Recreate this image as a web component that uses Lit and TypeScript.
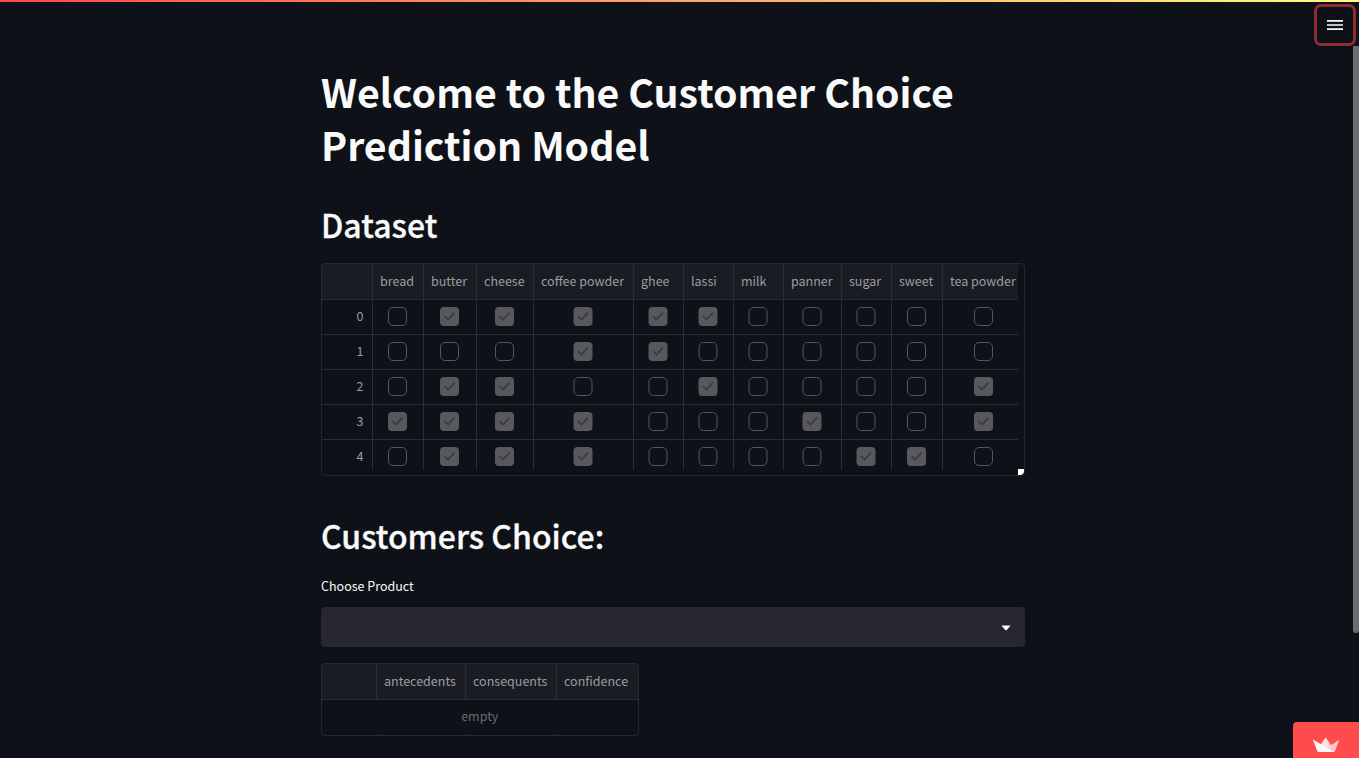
import { LitElement, html, css, svg, nothing } from "lit";
import { customElement, property } from "lit/decorators.js";

interface Column {
  name: string;
  width: number;
  checked: boolean[];
}

const col = (name: string, width: number, bits: string): Column => ({
  name,
  width,
  checked: [...bits].map((b) => b === "1"),
});

const DATASET: Column[] = [
  col("bread", 51, "00010"),
  col("butter", 53, "10111"),
  col("cheese", 57, "10111"),
  col("coffee powder", 100, "11011"),
  col("ghee", 50, "11000"),
  col("lassi", 50, "10100"),
  col("milk", 50, "00000"),
  col("panner", 58, "00010"),
  col("sugar", 50, "00001"),
  col("sweet", 51, "00001"),
  col("tea powder", 76, "00110"),
];

@customElement("check-cell")
class CheckCell extends LitElement {
  @property({ type: Boolean }) checked = false;
  // Boxes in even-width columns are centred on a half pixel.
  @property({ type: Boolean }) half = false;

  static styles = css`
    :host { display: block; height: 19px; }
    .icon { display: block; }
  `;

  render() {
    const w = this.half ? 20 : 19;
    const x = this.half ? 0.5 : 0;
    return html`<svg class="icon" width=${w} height="19" viewBox="${-x} 0 ${w} 19" fill="none">
      ${this.checked
        ? svg`<rect x="0" y="0" width="19" height="19" rx="4" fill="#57595f"/>
            <path d="M5 9.6L8.1 12.6L14 6.2" stroke="#3a3c42" stroke-width="1.8" stroke-linecap="round" stroke-linejoin="round"/>`
        : svg`<rect x="0.5" y="0.5" width="18" height="18" rx="4.5" stroke="#55575b"/>`}
    </svg>`;
  }
}

@customElement("data-grid")
class DataGrid extends LitElement {
  static styles = css`
    :host { display: block; }
    .frame {
      box-sizing: border-box; width: 704px; height: 213px; position: relative;
      border: 1px solid #25282e; border-radius: 4px; overflow: hidden;
    }
    .canvas { width: 696px; height: 206px; overflow: hidden; }
    .row { display: flex; height: 35px; }
    .row.head { height: 36px; background: #1a1c23; }
    .cell {
      box-sizing: border-box; flex: none; display: flex; align-items: center; justify-content: center;
      border-right: 1px solid #2b2d32; border-bottom: 1px solid #2b2d32; padding: 0 1px 2px 0;
    }
    .cell:last-child { border-right: 0; padding-right: 0; padding-left: 5px; }
    .cell.index { width: 51px; justify-content: flex-end; padding: 0 8.5px 2px 0; color: #9b9ca0; }
    .cell.title { justify-content: flex-start; padding: 0 0 2px 7px; white-space: nowrap; color: #9b9ca0; }
    .row { font-size: 12.5px; line-height: 18px; }
    .grip {
      position: absolute; right: 0; bottom: 0; width: 6px; height: 6px; background: #fff;
      border-bottom-right-radius: 4px;
    }
  `;

  render() {
    const last = DATASET.length - 1;
    return html`<div class="frame">
      <div class="canvas">
        <div class="row head">
          <div class="cell index"></div>
          ${DATASET.map((c) => html`<div class="cell title" style="width:${c.width}px">${c.name}</div>`)}
        </div>
        ${[0, 1, 2, 3, 4].map(
          (i) => html`<div class="row">
            <div class="cell index">${i}</div>
            ${DATASET.map(
              (c, k) => html`<div class="cell" style="width:${c.width}px"><check-cell
                ?checked=${c.checked[i]} ?half=${c.width % 2 === 0 && k !== last}></check-cell></div>`
            )}
          </div>`
        )}
      </div>
      <div class="grip"></div>
    </div>`;
  }
}

@customElement("empty-grid")
class EmptyGrid extends LitElement {
  static styles = css`
    :host { display: block; }
    .frame {
      box-sizing: border-box; width: 318px; height: 73px; border: 1px solid #25282e;
      border-radius: 4px; overflow: hidden; font-size: 12.5px; line-height: 18px;
    }
    .row { display: grid; grid-template-columns: 55px 89px 91px 1fr; }
    .head { height: 36px; box-sizing: border-box; background: #1a1c23; border-bottom: 1px solid #2b2d32; }
    .cell { border-right: 1px solid #2b2d32; padding-left: 7px; display: flex; align-items: center; color: #9b9ca0; }
    .head .cell { padding-bottom: 2px; }
    .cell:last-child { border-right: 0; }
    .empty {
      height: 34px; box-sizing: border-box; padding: 0 0.5px 2px 0; display: flex; align-items: center;
      justify-content: center; color: #676a71;
    }
    .stub { height: 1px; }
  `;

  render() {
    const names = ["", "antecedents", "consequents", "confidence"];
    return html`<div class="frame">
      <div class="row head">${names.map((n) => html`<div class="cell">${n || nothing}</div>`)}</div>
      <div class="empty">empty</div>
      <div class="row stub">${names.map(() => html`<div class="cell"></div>`)}</div>
    </div>`;
  }
}

@customElement("app-root")
class AppRoot extends LitElement {
  static styles = css`
    :host {
      display: block; position: relative; height: 758px; overflow: hidden; background: #0e1117; color: #fafafa;
      font-family: "Source Sans Pro", "Noto Sans CJK SC", sans-serif;
    }
    .rainbow { height: 2px; background: linear-gradient(90deg, #ff4b4b, #fffd80); }
    .main { width: 704px; padding: 62px 0 0 321px; }
    h1, h2 { margin: 0; white-space: nowrap; }
    h1 { font-size: 39.25px; line-height: 53px; font-weight: 700; }
    h2 { font-size: 32px; line-height: 43px; font-weight: 500; -webkit-text-stroke: 0.3px #fafafa; }
    .dataset { padding: 33px 0 17px; }
    .choice { padding: 38px 0 18px; }
    .label { font-size: 12.5px; line-height: 21px; padding-bottom: 11px; }
    .select {
      height: 40px; background: #262730; border-radius: 4px; display: flex; align-items: center;
      justify-content: flex-end; padding: 1px 14px 0 0; box-sizing: border-box; margin-bottom: 16px;
    }
    .menu {
      position: absolute; left: 1314px; top: 4px; width: 42px; height: 42px; box-sizing: border-box;
      border: 3px solid #8b2d33; border-radius: 7px; display: grid; place-items: center;
    }
    .thumb { position: absolute; right: 0; top: 46px; width: 6px; height: 587px; background: #6b6c70; border-radius: 0 0 3px 3px; }
    .badge {
      position: absolute; right: 0; bottom: 0; width: 66px; height: 36px; background: #ff4b4b;
      border-top-left-radius: 4px;
    }
    .crown { display: block; margin: 15px 0 0 19px; }
  `;

  render() {
    return html`
      <div class="rainbow"></div>
      <main class="main">
        <h1>Welcome to the Customer Choice<br />Prediction Model</h1>
        <h2 class="dataset">Dataset</h2>
        <data-grid></data-grid>
        <h2 class="choice">Customers Choice:</h2>
        <div class="label">Choose Product</div>
        <div class="select">
          <svg width="10" height="6" viewBox="0 0 10 6"><path d="M0.4 0.5H9.6L5.8 4.9Q5 5.6 4.2 4.9Z" fill="#fafafa"/></svg>
        </div>
        <empty-grid></empty-grid>
      </main>
      <div class="menu">
        <svg width="16" height="10" viewBox="0 0 16 10">
          <path d="M0 0H16V1.65H0ZM0 4.2H16V5.8H0ZM0 8.35H16V10H0Z" fill="#fafafa"/>
        </svg>
      </div>
      <div class="thumb"></div>
      <div class="badge">
        <svg class="crown" width="28" height="16" viewBox="0 0 28 16">
          <path d="M13.8 0.5L20 9.5L22.5 15H5.5L8 8Z" fill="#ffd0d6"/>
          <path d="M27.2 2.8L22.5 14.7L18.5 9.8Z" fill="#ffc0c8"/>
          <path d="M0.8 2.5L21.8 14.8H5.6Z" fill="#fffafa"/>
          <path d="M13.8 0.5L9.2 7.4L18 12.5Z" fill="#ffe0e3"/>
          <path d="M27 3L17 9.6L22.5 14.9Z" fill="#ffc9d0"/>
        </svg>
      </div>
    `;
  }
}
